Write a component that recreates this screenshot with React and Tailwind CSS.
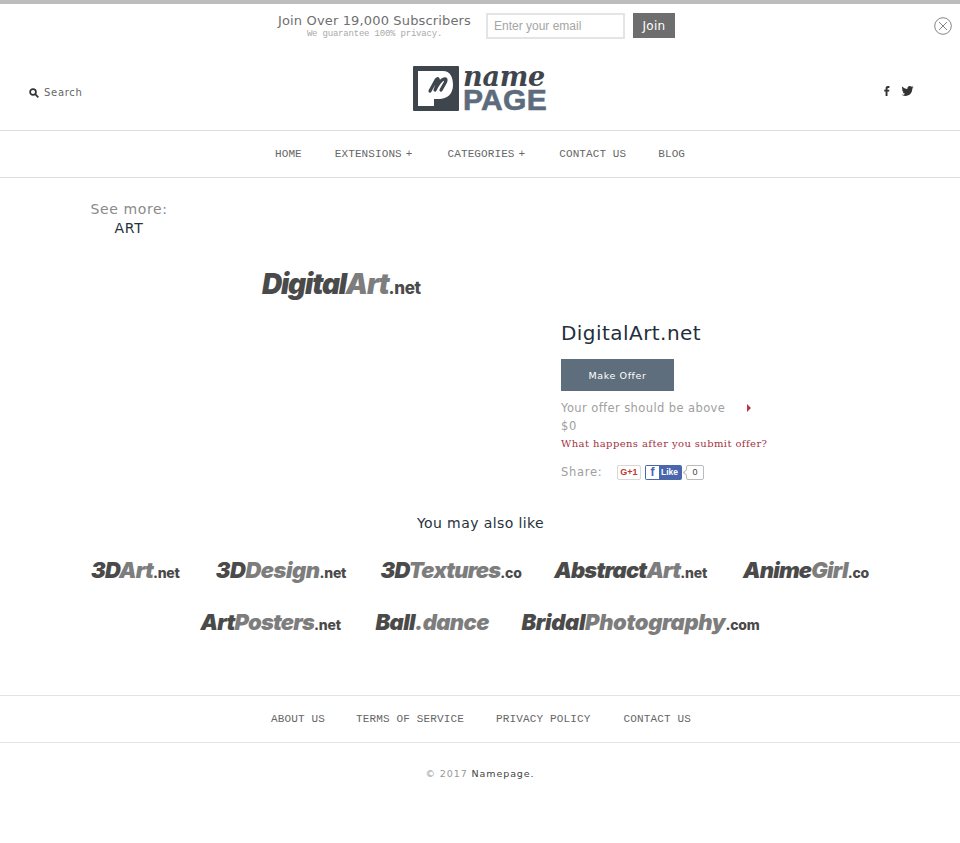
import React from 'react';

const sans = "font-['DejaVu_Sans',sans-serif]";
const mono = "font-['Liberation_Mono',monospace]";
const logoFont = "font-['Inter',sans-serif]";

const RELATED_ROW_1 = [
  { dark: '3D', light: 'Art', ext: '.net', width: 'w-[90px]', tracking: 'tracking-[-0.8px]' },
  { dark: '3D', light: 'Design', ext: '.net', width: 'w-[130px]', tracking: 'tracking-[-0.5px]' },
  { dark: '3D', light: 'Textures', ext: '.co', width: 'w-[139px]', tracking: 'tracking-[-0.8px]' },
  { dark: 'Abstract', light: 'Art', ext: '.net', width: 'w-[154px]', tracking: 'tracking-[-0.8px]' },
  { dark: 'Anime', light: 'Girl', ext: '.co', width: 'w-[127px]', tracking: 'tracking-[-0.8px]' },
];

const RELATED_ROW_2 = [
  { dark: 'Art', light: 'Posters', ext: '.net', width: 'w-[140px]', tracking: 'tracking-[-0.8px]' },
  { dark: 'Ball', light: '.dance', ext: '', width: 'w-[114px]', tracking: 'tracking-[-0.6px]' },
  { dark: 'Bridal', light: 'Photography', ext: '.com', width: 'w-[239px]', tracking: 'tracking-[-0.35px]' },
];

function Wordmark({ dark, light, ext, width, tracking }) {
  return (
    <a className={`${logoFont} ${width} ${tracking} block whitespace-nowrap text-[22px] font-black italic leading-none`}>
      <span className="text-[#4a4a4a]">{dark}</span>
      <span className="text-[#7d7d7d]">{light}</span>
      {ext && <span className="text-[14px] font-extrabold not-italic tracking-[-0.2px] text-[#4a4a4a]">{ext}</span>}
    </a>
  );
}

function Logo() {
  return (
    <div className="flex h-[46px] w-[136px] shrink-0 items-start gap-[4px]">
      <svg width="46" height="46" viewBox="0 0 46 46" className="shrink-0">
        <rect width="46" height="45" rx="1" fill="#3f454d" />
        <path d="M5 5 H30 C37 5 40 11 40 19 C40 28 34 33 26 33 H21 V40 H5 Z" fill="#fff" />
        <path d="M17 25 L23 14 C25 11 26 14 25 16 L22 24 C25 18 28 14 31 13 C34 12 33 15 32 17 L28 24" fill="none" stroke="#3f454d" strokeWidth="3.2" strokeLinecap="round" strokeLinejoin="round" />
      </svg>
      <div className="flex flex-col">
        <span className="font-['DejaVu_Serif',serif] text-[27px] font-bold italic leading-[22px] tracking-[-0.2px] text-[#3f454d]">name</span>
        <span className="font-['Liberation_Sans',sans-serif] text-[30px] font-bold leading-[23px] tracking-[0.3px] text-[#5c6c7c] [-webkit-text-stroke:0.6px_#5c6c7c]">PAGE</span>
      </div>
    </div>
  );
}

export default function App() {
  return (
    <div className="min-h-[843px] bg-white">
      <div className="h-[4px] bg-[#bdbdbd]" />

      <div className="relative flex h-[36px] items-start justify-center pr-[7px] pt-[9px]">
        <div className="mr-[15px] flex flex-col items-center">
          <span className={`${sans} text-[13px] leading-[16px] tracking-[0.15px] text-[#6f6f6f]`}>Join Over 19,000 Subscribers</span>
          <span className={`${mono} text-[9px] leading-[10px] tracking-[-0.2px] text-[#aaa]`}>We guarantee 100% privacy.</span>
        </div>
        <input
          placeholder="Enter your email"
          className="h-[26px] w-[139px] border-2 border-[#e4e4e4] bg-white px-[6px] font-['Liberation_Sans',sans-serif] text-[12px] text-[#999] placeholder:text-[#a5a5a5]"
        />
        <button className={`${sans} ml-[8px] h-[25px] w-[42px] bg-[#6e6e6e] text-[12px] tracking-[0.3px] text-white`}>Join</button>
        <button className="absolute right-[8px] top-[13px]" aria-label="Close">
          <svg width="18" height="18" viewBox="0 0 18 18" fill="none" stroke="#777" strokeWidth="0.9">
            <circle cx="9" cy="9" r="8.3" />
            <path d="M5 5 L13 13 M13 5 L5 13" />
          </svg>
        </button>
      </div>

      <header className="flex h-[90px] items-start pl-[29px] pr-[46px] pt-[26px]">
        <div className="flex w-[384px] items-center gap-[5px] pt-[19px]">
          <svg width="10" height="10" viewBox="0 0 10 10" fill="none" stroke="#333" strokeWidth="1.7">
            <circle cx="4" cy="4" r="2.9" />
            <path d="M6.2 6.2 L9.3 9.3" />
          </svg>
          <span className={`${sans} text-[10px] tracking-[0.7px] text-[#666]`}>Search</span>
        </div>
        <Logo />
        <div className="flex flex-1 items-center justify-end gap-[11px] pt-[20px]">
          <svg width="6" height="10" viewBox="0 0 6 10" fill="#333">
            <path d="M1.6 10 V5.5 H0.2 V3.7 H1.6 V2.4 C1.6 0.9 2.5 0.1 3.8 0.1 H5.4 V1.9 H4.3 C3.7 1.9 3.5 2.2 3.5 2.7 V3.7 H5.4 L5.1 5.5 H3.5 V10 Z" />
          </svg>
          <svg width="13" height="10" viewBox="0 0 24 20" fill="#333">
            <path d="M24 2.4 C23.1 2.8 22.2 3 21.2 3.2 C22.2 2.6 23 1.6 23.4 0.5 C22.4 1.1 21.4 1.5 20.2 1.7 C19.3 0.7 18 0 16.6 0 C13.9 0 11.7 2.2 11.7 4.9 C11.7 5.3 11.8 5.7 11.8 6 C7.7 5.8 4.1 3.9 1.7 0.9 C1.3 1.6 1 2.5 1 3.4 C1 5.1 1.9 6.6 3.2 7.5 C2.4 7.5 1.6 7.2 1 6.9 C1 9.3 2.7 11.3 4.9 11.8 C4.1 12 3.3 12 2.7 11.9 C3.3 13.9 5.1 15.3 7.3 15.3 C4.9 17.2 2.4 17.9 0 17.6 C2.2 19 4.8 20 7.5 20 C16.6 20 21.5 12.5 21.5 6 L21.5 5.4 C22.5 4.6 23.3 3.6 24 2.4 Z" />
          </svg>
        </div>
      </header>

      <nav className={`${mono} flex h-[48px] items-center border-y border-[#dedede] pl-[275px] text-[11px] tracking-[0.1px] text-[#666]`}>
        <a className="mr-[33px]">HOME</a>
        <a className="mr-[35px]">EXTENSIONS<span className="ml-[4px]">+</span></a>
        <a className="mr-[34px]">CATEGORIES<span className="ml-[4px]">+</span></a>
        <a className="mr-[32px]">CONTACT US</a>
        <a>BLOG</a>
      </nav>

      <main className="pl-[91px] pr-[90px]">
        <div className={`${sans} flex w-[76px] flex-col items-center pt-[22px]`}>
          <span className="whitespace-nowrap text-[14px] leading-[18px] tracking-[0.6px] text-[#8a8a8a]">See more:</span>
          <span className="mt-[1px] text-[14px] leading-[18px] tracking-[0.8px] text-[#26323c]">ART</span>
        </div>

        <div className="flex">
          <div className="w-[470px] pl-[171px] pt-[29px]">
            <a className={`${logoFont} block whitespace-nowrap text-[28px] font-black italic leading-[36px] tracking-[-1.2px]`}>
              <span className="text-[#4a4a4a]">Digital</span>
              <span className="text-[#7d7d7d]">Art</span>
              <span className="text-[17px] font-extrabold not-italic tracking-[-0.3px] text-[#4a4a4a]">.net</span>
            </a>
          </div>
          <div className="pt-[83px]">
            <h1 className={`${sans} text-[20px] leading-[26px] tracking-[0.45px] text-[#1f2f3d]`}>DigitalArt.net</h1>
            <button className={`${sans} mt-[13px] h-[32px] w-[113px] bg-[#5f6e7c] pt-[3px] text-[9.5px] tracking-[0.6px] text-white`}>Make Offer</button>
            <div className={`${sans} mt-[8px] flex items-center text-[11.5px] leading-[18px] tracking-[0.4px] text-[#a0a0a0]`}>
              <span>Your offer should be above</span>
              <span className="ml-[22px] h-0 w-0 border-y-[4px] border-l-[4px] border-y-transparent border-l-[#b23a48]" />
            </div>
            <div className={`${sans} text-[11.5px] leading-[18px] tracking-[0.7px] text-[#a0a0a0]`}>$0</div>
            <a className="block font-['DejaVu_Serif',serif] text-[10px] leading-[18px] tracking-[0.4px] text-[#a5323f]">What happens after you submit offer?</a>
            <div className="mt-[11px] flex items-center">
              <span className={`${sans} w-[56px] text-[11.5px] tracking-[0.7px] text-[#a0a0a0]`}>Share:</span>
              <span className="flex h-[15px] w-[24px] items-center justify-center rounded-[2px] border border-[#d8d8d8] font-['Liberation_Sans',sans-serif] text-[9px] font-bold text-[#c0392b]">G+1</span>
              <span className="ml-[4px] flex h-[15px] w-[37px] items-center gap-[2px] rounded-[2px] bg-[#4a66ad] pl-[1px] font-['Liberation_Sans',sans-serif] text-[8.5px] font-bold text-white">
                <span className="flex h-[13px] w-[13px] items-end justify-center bg-white text-[12px] leading-[13px] text-[#4a66ad]">f</span>
                Like
              </span>
              <span className="relative ml-[4px] flex h-[15px] w-[18px] items-center justify-center rounded-[2px] border border-[#bbb] bg-white font-['Liberation_Sans',sans-serif] text-[9px] text-[#444]">
                <span className="absolute left-[-3px] top-[4px] h-[5px] w-[5px] rotate-45 border-b border-l border-[#bbb] bg-white" />
                0
              </span>
            </div>
          </div>
        </div>

        <h2 className={`${sans} mt-[33px] text-center text-[14px] leading-[18px] tracking-[0.4px] text-[#26323c]`}>You may also like</h2>

        <div className="mt-[27px] flex items-center justify-between">
          {RELATED_ROW_1.map(w => <Wordmark key={w.dark + w.light} {...w} />)}
        </div>
        <div className="mt-[30px] flex items-center justify-center">
          <Wordmark {...RELATED_ROW_2[0]} />
          <span className="w-[35px]" />
          <Wordmark {...RELATED_ROW_2[1]} />
          <span className="w-[32px]" />
          <Wordmark {...RELATED_ROW_2[2]} />
        </div>
      </main>

      <footer className="mt-[62px]">
        <div className={`${mono} flex h-[48px] items-center border-y border-[#e3e3e3] pl-[271px] text-[11px] tracking-[0.15px] text-[#666]`}>
          <a className="mr-[31px]">ABOUT US</a>
          <a className="mr-[32px]">TERMS OF SERVICE</a>
          <a className="mr-[33px]">PRIVACY POLICY</a>
          <a>CONTACT US</a>
        </div>
        <p className={`${sans} mt-[24px] text-center text-[9.5px] tracking-[0.9px] text-[#999]`}>
          © 2017 <span className="text-[#444]">Namepage.</span>
        </p>
      </footer>
    </div>
  );
}
